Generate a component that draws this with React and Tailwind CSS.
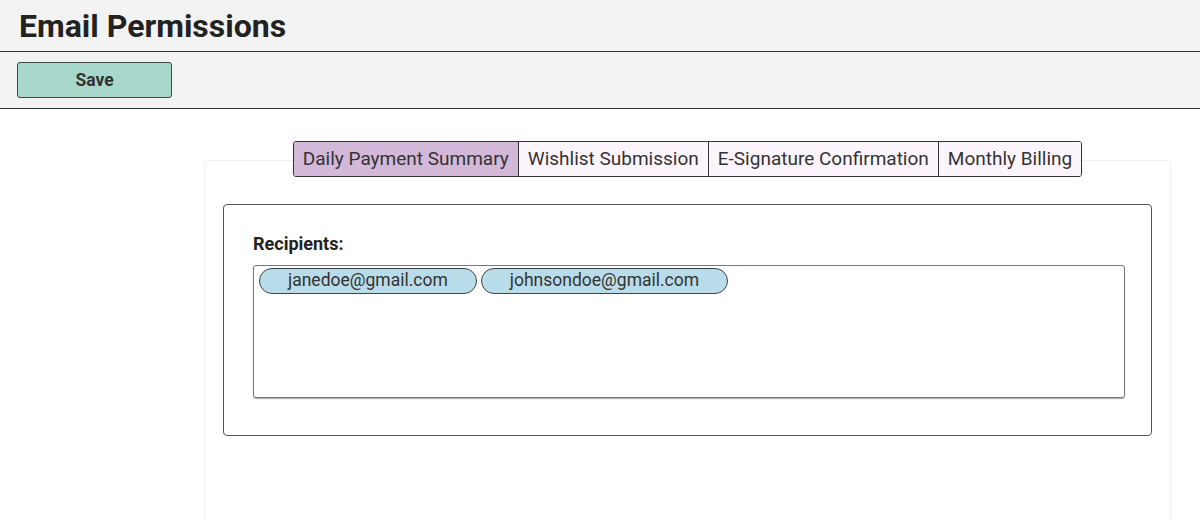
import React, { useState } from "react";

const tabs = ["Daily Payment Summary", "Wishlist Submission", "E-Signature Confirmation", "Monthly Billing"];
const recipients = ["janedoe@gmail.com", "johnsondoe@gmail.com"];

const RecipientChip = ({ email }) => (
  <span className="inline-flex items-center h-[26px] px-7 rounded-full border border-[#444] bg-[#b9dcea] text-[17.5px] text-[#333] leading-none">
    {email}
  </span>
);

export default function App() {
  const [activeTab, setActiveTab] = useState(0);

  return (
    <div className="h-[520px] overflow-hidden bg-white font-['Roboto','Liberation_Sans',sans-serif] text-[#222]">
      <div className="h-[52px] bg-[#f3f3f3] border-b border-[#333] flex items-center pl-[19px]">
        <h1 className="text-[32px] font-bold text-[#222] leading-none">Email Permissions</h1>
      </div>
      <div className="h-[57px] bg-[#f3f3f3] border-b border-[#333] pl-[17px] pt-[10px]">
        <button className="w-[155px] h-[36px] rounded-[3px] border border-[#444] bg-[#a8d8cc] text-[17.5px] font-bold text-[#333]">
          Save
        </button>
      </div>

      <div className="ml-[204px] w-[967px] mt-[51px] min-h-[380px] border border-[#f1f1f1] rounded-sm">
        <div className="flex justify-center -mt-[20px]">
          <div className="flex h-[36px] border border-[#333] rounded-[3px] overflow-hidden">
            {tabs.map((tab, i) => (
              <button
                key={tab}
                onClick={() => setActiveTab(i)}
                className={
                  i === activeTab
                    ? "px-[9px] text-[19px] text-[#333] bg-[#d3b8da] border-r border-[#333]"
                    : i === tabs.length - 1
                    ? "px-[9px] text-[19px] text-[#333] bg-[#fdf5fd]"
                    : "px-[9px] text-[19px] text-[#333] bg-[#fdf5fd] border-r border-[#333]"
                }
              >
                {tab}
              </button>
            ))}
          </div>
        </div>

        <div className="mx-[18px] mt-[27px] border border-[#555] rounded-[4px] pl-[29px] pr-[26px] pt-[26px] pb-[37px]">
          <div className="text-[18px] font-bold text-[#222] leading-[26px] mb-[8px]">Recipients:</div>
          <div className="h-[133px] border border-[#777] rounded-[3px] shadow-[0_1px_1px_rgba(0,0,0,0.35)] px-[5px] pt-[2px] flex items-start gap-[4px]">
            {recipients.map((email) => (
              <RecipientChip key={email} email={email} />
            ))}
          </div>
        </div>
      </div>
    </div>
  );
}
